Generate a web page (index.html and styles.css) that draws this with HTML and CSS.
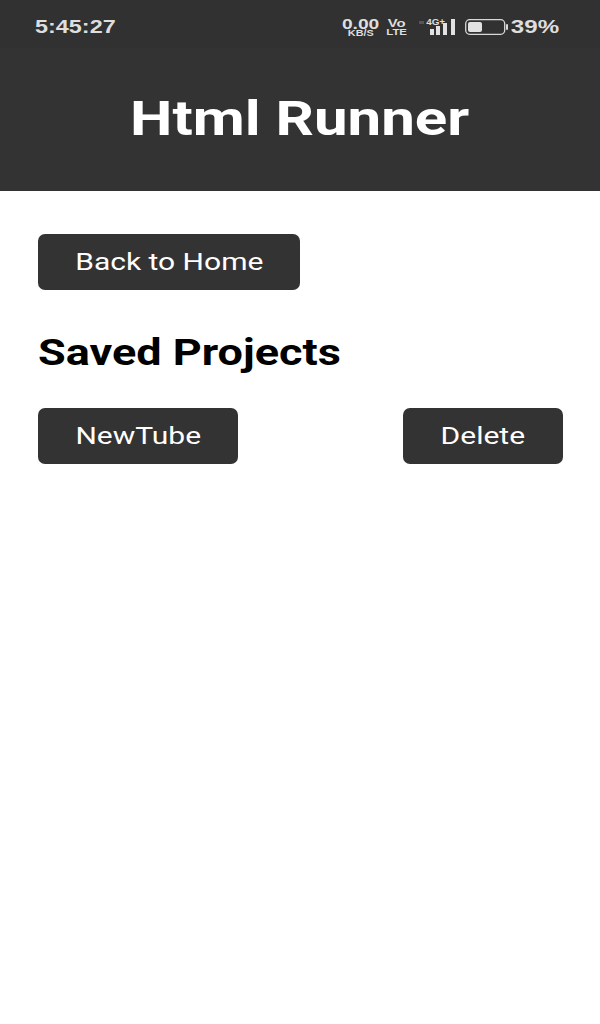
FILE: index.html
```html
<!DOCTYPE html>
<html lang="en">
<head>
  <meta charset="UTF-8" />
  <meta name="viewport" content="width=device-width, initial-scale=1" />
  <title>Html Runner</title>
  <link rel="stylesheet" href="styles.css">
</head>
<body>

<div class="status-bar">
  <span class="time">5:45:27</span>
  <div class="status-icons">
    <div class="speed">
      <span class="speed-num">0.00</span>
      <span class="speed-unit">KB/S</span>
    </div>
    <div class="volte">
      <span class="volte-vo">Vo</span>
      <span class="volte-lte">LTE</span>
    </div>
    <div class="signal">
      <span class="signal-arrows"></span>
      <span class="signal-label">4G+</span>
      <svg class="signal-bars" width="25" height="16" viewBox="0 0 25 16">
        <rect x="0" y="10" width="4" height="6" fill="#e2e2e2" />
        <rect x="6" y="7" width="4" height="9" fill="#e2e2e2" />
        <rect x="13" y="4" width="4" height="12" fill="#e2e2e2" />
        <rect x="21" y="0" width="4" height="16" fill="#e2e2e2" />
      </svg>
    </div>
    <svg class="battery" width="44" height="16" viewBox="0 0 44 16">
      <rect x="0.7" y="0.7" width="39" height="14.6" rx="4" fill="none" stroke="#d8d8d8" stroke-width="1.3" />
      <rect x="3" y="3" width="14" height="10" rx="2" fill="#e2e2e2" />
      <rect x="41" y="5" width="2" height="6" rx="1" fill="#d8d8d8" />
    </svg>
    <span class="percent"><span class="percent-text">39%</span></span>
  </div>
</div>

<header class="app-header">
  <h1>Html Runner</h1>
</header>

<main class="content">
  <button class="btn btn-back"><span class="btn-label">Back to Home</span></button>
  <h2><span class="heading-text">Saved Projects</span></h2>
  <div class="project-row">
    <button class="btn btn-project"><span class="btn-label">NewTube</span></button>
    <button class="btn btn-delete"><span class="btn-label">Delete</span></button>
  </div>
</main>

</body>
</html>
```

FILE: styles.css
```css
* { box-sizing: border-box; }
body, html {
  margin: 0;
  padding: 0;
  height: 100%;
  background: #fff;
  font-family: Roboto, "Liberation Sans", sans-serif;
}
.status-bar {
  height: 48px;
  padding: 6px 42px 0 35px;
  background: #313131;
  color: #dedede;
  display: flex;
  align-items: center;
  justify-content: space-between;
}
.time {
  display: inline-block;
  transform: scaleX(1.3);
  transform-origin: left center;
  font-family: "Liberation Sans", sans-serif;
  font-size: 18px;
  font-weight: 700;
}
.status-icons {
  display: flex;
  align-items: center;
  font-family: "Liberation Sans", sans-serif;
  font-weight: 700;
}
.speed, .volte {
  display: flex;
  flex-direction: column;
  align-items: center;
  line-height: 9px;
}
.speed {
  width: 37px;
}
.speed-num {
  display: inline-block;
  transform: scaleX(1.28);
  font-size: 15px;
  line-height: 11px;
}
.speed-unit {
  display: inline-block;
  transform: scaleX(1.2);
  font-size: 9px;
  line-height: 8px;
}
.volte {
  width: 20px;
  margin-left: 8px;
}
.volte-vo {
  display: inline-block;
  transform: scaleX(1.35);
  font-size: 11px;
  line-height: 10px;
}
.volte-lte {
  display: inline-block;
  transform: scaleX(1.2);
  font-size: 9.5px;
  line-height: 8px;
}
.signal {
  position: relative;
  width: 25px;
  height: 16px;
  margin-left: 23px;
}
.signal-bars {
  display: block;
}
.signal-arrows {
  position: absolute;
  top: 2px;
  left: -11px;
  width: 5px;
  height: 3px;
  background: #555;
}
.signal-label {
  position: absolute;
  top: -1px;
  left: -3px;
  transform: scaleX(1.1);
  font-size: 9px;
  line-height: 8px;
}
.battery {
  margin-left: 10px;
}
.percent {
  display: flex;
  justify-content: center;
  width: 46px;
  margin-left: 3px;
}
.percent-text {
  display: inline-block;
  transform: scaleX(1.34);
  font-size: 18px;
}
.app-header {
  height: 143px;
  padding-bottom: 2px;
  background: #333;
  color: #fff;
  display: flex;
  align-items: center;
  justify-content: center;
}
.app-header h1 {
  margin: 0;
  transform: scaleX(1.25);
  font-size: 48px;
  font-weight: 700;
}
.content {
  padding: 43px 37px 0 38px;
}
.btn {
  height: 56px;
  padding: 0;
  border: none;
  border-radius: 7px;
  background: #333;
  color: #fff;
  font-family: Roboto, "Liberation Sans", sans-serif;
  font-size: 24px;
}
.btn-label {
  display: inline-block;
  transform: scaleX(1.25);
}
.btn-back {
  display: block;
  width: 262px;
}
.content h2 {
  margin: 38px 0 30px;
  font-size: 36px;
  line-height: 50px;
  font-weight: 700;
  color: #000;
}
.heading-text {
  display: inline-block;
  transform: scaleX(1.25);
  transform-origin: left center;
}
.project-row {
  display: flex;
  justify-content: space-between;
}
.btn-project {
  width: 200px;
}
.btn-delete {
  width: 160px;
}
```
